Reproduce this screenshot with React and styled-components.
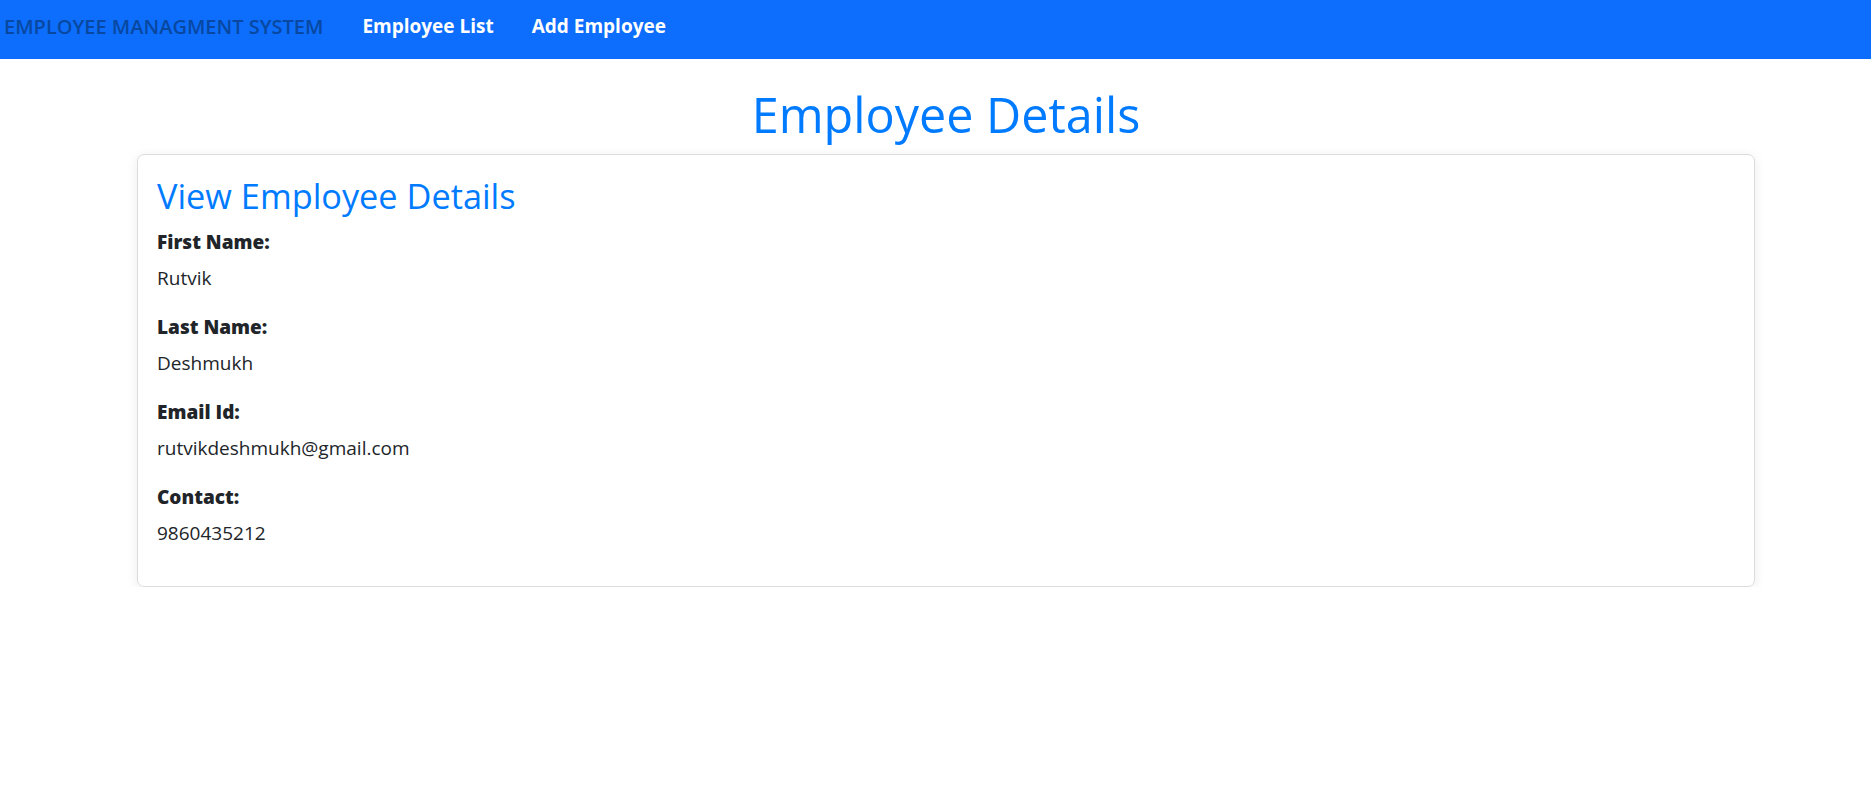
import styled, { createGlobalStyle } from "styled-components";

const GlobalStyle = createGlobalStyle`
    body {
        margin: 0;
        font-family: "Open Sans", "Noto Sans", sans-serif;
        font-size: 19px;
        line-height: 1.5;
        color: #212529;
        background: #fff;
    }
`;

const Navbar = styled.nav`
    height: 59px;
    box-sizing: border-box;
    background: #0d6efd;
    display: flex;
    align-items: center;
    padding: 0 0 6px 4px;
`;

const Brand = styled.a`
    font-size: 20px;
    font-weight: 600;
    color: #0848a0;
    text-decoration: none;
    margin-right: 20px;
`;

const NavLink = styled.a`
    font-size: 19px;
    font-weight: 700;
    color: #fff;
    text-decoration: none;
    padding: 0 19px;
`;

const Main = styled.main`
    padding: 0 116px 0 137px;
`;

const Title = styled.h1`
    margin: 25px 0 10px;
    text-align: center;
    font-size: 48.5px;
    font-weight: 500;
    line-height: 60px;
    color: #007bff;
`;

const Card = styled.div`
    border: 1px solid #dcdcdc;
    border-radius: 7px;
    box-shadow: 0 2px 12px rgba(0, 0, 0, 0.08);
    padding: 20px 19px 19px;
`;

const CardTitle = styled.h3`
    margin: 0 0 10px;
    font-size: 34.3px;
    font-weight: 500;
    line-height: 42px;
    color: #007bff;
`;

const Field = styled.div`
    margin-bottom: 19px;
`;

const Label = styled.div`
    font-weight: 800;
    line-height: 30px;
    margin-bottom: 6px;
`;

const Value = styled.div`
    line-height: 30px;
`;

const employee = [
    { label: "First Name:", value: "Rutvik" },
    { label: "Last Name:", value: "Deshmukh" },
    { label: "Email Id:", value: "rutvikdeshmukh@gmail.com" },
    { label: "Contact:", value: "9860435212" },
];

function App() {
    return (
        <>
            <GlobalStyle />
            <Navbar>
                <Brand href="#">EMPLOYEE MANAGMENT SYSTEM</Brand>
                <NavLink href="#">Employee List</NavLink>
                <NavLink href="#">Add Employee</NavLink>
            </Navbar>
            <Main>
                <Title>Employee Details</Title>
                <Card>
                    <CardTitle>View Employee Details</CardTitle>
                    {employee.map((item) => (
                        <Field key={item.label}>
                            <Label>{item.label}</Label>
                            <Value>{item.value}</Value>
                        </Field>
                    ))}
                </Card>
            </Main>
        </>
    );
}

export default App;
